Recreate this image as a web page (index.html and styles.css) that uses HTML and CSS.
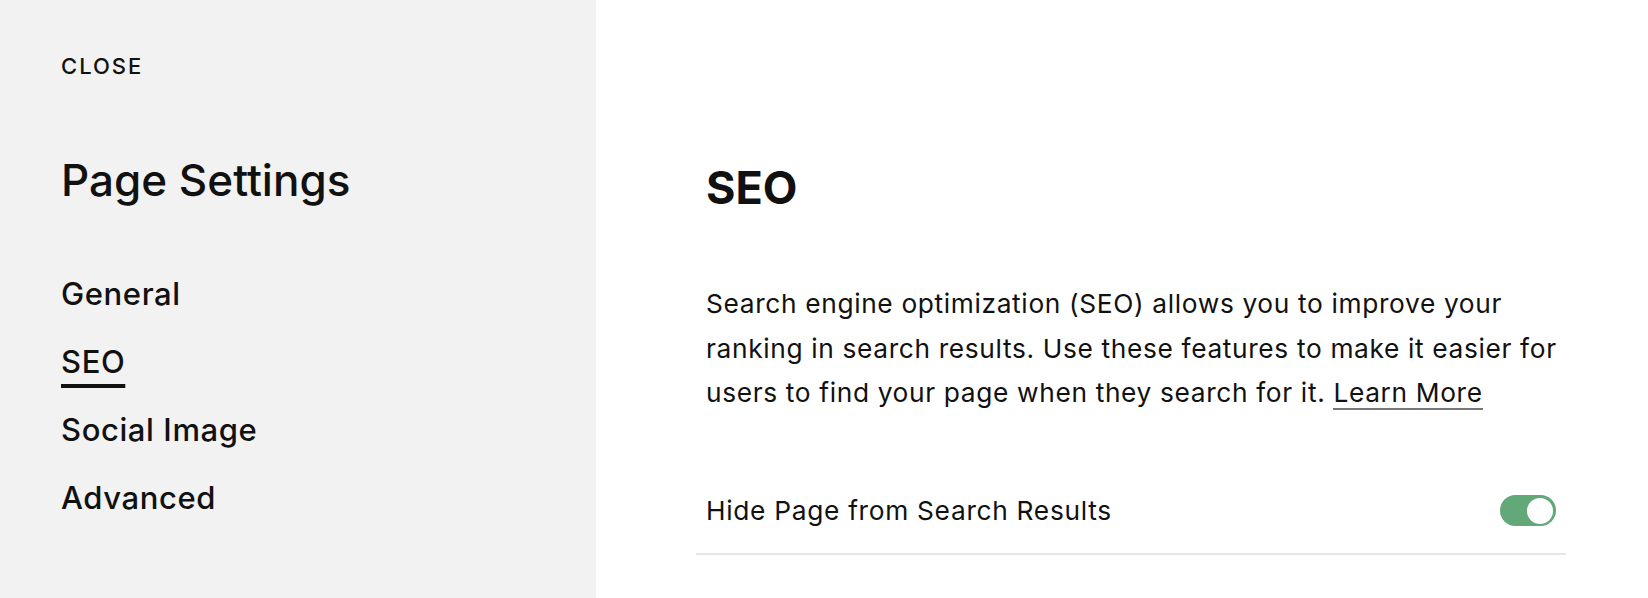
FILE: index.html
```html
<!DOCTYPE html>
<html lang="en">
<head>
<meta charset="utf-8">
<title>Page Settings</title>
<link rel="stylesheet" href="styles.css">
</head>
<body>
<div class="app">
  <aside class="sidebar">
    <a class="close" href="#">CLOSE</a>
    <h1 class="title">Page Settings</h1>
    <nav class="nav">
      <a class="nav-item" href="#">General</a>
      <a class="nav-item active" href="#">SEO</a>
      <a class="nav-item" href="#">Social Image</a>
      <a class="nav-item" href="#">Advanced</a>
    </nav>
  </aside>
  <main class="main">
    <div class="content">
      <h2 class="heading">SEO</h2>
      <p class="desc">Search engine optimization (SEO) allows you to improve your<br>ranking in search results. Use these features to make it easier for<br>users to find your page when they search for it. <a class="learn" href="#">Learn More</a></p>
      <div class="row">
        <span class="row-label">Hide Page from Search Results</span>
        <span class="toggle on"><span class="knob"></span></span>
      </div>
    </div>
  </main>
</div>
</body>
</html>
```
FILE: styles.css
```css
* { box-sizing: border-box; }
html, body { margin: 0; padding: 0; }
body {
  font-family: Inter, "Noto Sans", "Liberation Sans", sans-serif;
  color: #111;
  background: #fff;
}
.app {
  display: flex;
  height: 598px;
  overflow: hidden;
}
.sidebar {
  width: 596px;
  flex: none;
  background: #f2f2f2;
  padding: 50px 0 0 61px;
  display: flex;
  flex-direction: column;
  align-items: flex-start;
}
.close {
  font-size: 22px;
  font-weight: 500;
  letter-spacing: 2px;
  line-height: 32px;
  color: #111;
  text-decoration: none;
}
.title {
  margin: 72px 0 0;
  font-size: 44px;
  font-weight: 500;
  line-height: 52px;
}
.nav {
  margin-top: 68px;
  display: flex;
  flex-direction: column;
  align-items: flex-start;
  gap: 28px;
}
.nav-item {
  font-size: 31px;
  font-weight: 500;
  letter-spacing: 0.6px;
  line-height: 40px;
  color: #111;
  text-decoration: none;
}
.nav-item.active {
  text-decoration: underline;
  text-decoration-thickness: 4px;
  text-underline-offset: 11px;
}
.main {
  flex: 1;
  padding-left: 100px;
}
.content {
  width: 870px;
  padding-top: 160px;
}
.heading {
  margin: 0 0 0 10px;
  font-size: 45px;
  font-weight: 700;
  line-height: 56px;
}
.desc {
  margin: 66px 10px 0;
  font-size: 26.3px;
  letter-spacing: 0.65px;
  line-height: 44.5px;
  font-weight: 400;
  white-space: nowrap;
}
.learn {
  color: #111;
  text-decoration: none;
  border-bottom: 2px solid #777;
  padding-bottom: 0;
}
.row {
  margin-top: 79px;
  display: flex;
  align-items: center;
  justify-content: space-between;
  padding: 0 10px 26px;
  border-bottom: 2px solid #e5e5e5;
}
.row-label {
  font-size: 26.3px;
  letter-spacing: 0.7px;
  line-height: 32px;
}
.toggle {
  width: 56px;
  height: 31px;
  border-radius: 16px;
  background: #62a878;
  display: flex;
  align-items: center;
  justify-content: flex-end;
  padding: 0 3px;
}
.knob {
  width: 26px;
  height: 26px;
  border-radius: 50%;
  background: #fff;
}
```
